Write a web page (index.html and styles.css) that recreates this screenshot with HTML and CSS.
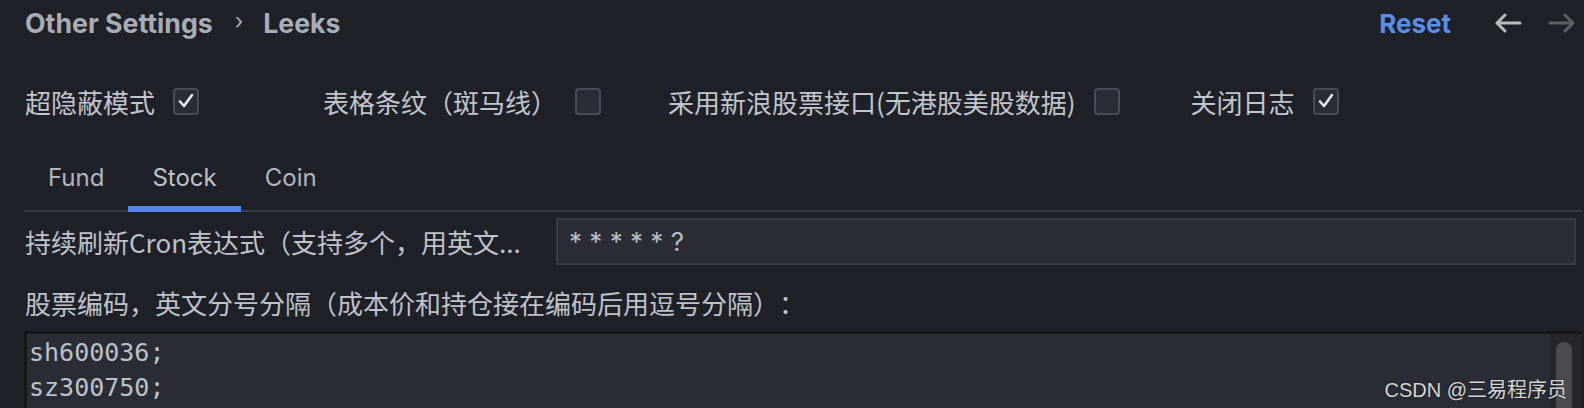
FILE: index.html
```html
<!DOCTYPE html>
<html lang="zh">
<head>
<meta charset="utf-8">
<title>Leeks Settings</title>
<link rel="stylesheet" href="styles.css">
</head>
<body>
<div class="page">
  <header class="header">
    <div class="crumbs">
      <span class="crumb">Other Settings</span>
      <span class="chev">›</span>
      <span class="crumb">Leeks</span>
    </div>
    <div class="actions">
      <span class="reset">Reset</span>
      <svg class="arrow back" width="28" height="20" viewBox="0 0 28 20"><path d="M26 10H3M11 2L3 10l8 8" fill="none" stroke="currentColor" stroke-width="3" stroke-linecap="round" stroke-linejoin="round"/></svg>
      <svg class="arrow fwd" width="28" height="20" viewBox="0 0 28 20"><path d="M2 10h23M17 2l8 8-8 8" fill="none" stroke="currentColor" stroke-width="3" stroke-linecap="round" stroke-linejoin="round"/></svg>
    </div>
  </header>

  <div class="options">
    <label class="opt opt-first"><span>超隐蔽模式</span><span class="cb checked"><svg width="18" height="18" viewBox="0 0 18 18"><path d="M3 9.5l4 4.5 8-11" fill="none" stroke="currentColor" stroke-width="2.6" stroke-linecap="round" stroke-linejoin="round"/></svg></span></label>
    <label class="opt opt-second"><span>表格条纹（斑马线）</span><span class="cb"></span></label>
    <label class="opt"><span>采用新浪股票接口(无港股美股数据)</span><span class="cb"></span></label>
    <label class="opt"><span>关闭日志</span><span class="cb checked"><svg width="18" height="18" viewBox="0 0 18 18"><path d="M3 9.5l4 4.5 8-11" fill="none" stroke="currentColor" stroke-width="2.6" stroke-linecap="round" stroke-linejoin="round"/></svg></span></label>
  </div>

  <nav class="tabs">
    <span class="tab">Fund</span>
    <span class="tab active">Stock</span>
    <span class="tab">Coin</span>
  </nav>

  <div class="cron-row">
    <span class="cron-label">持续刷新Cron表达式（支持多个，用英文...</span>
    <div class="input">* * * * * ?</div>
  </div>

  <div class="codes-label">股票编码，英文分号分隔（成本价和持仓接在编码后用逗号分隔）：</div>

  <div class="editor">
    <div class="code">sh600036;<br>sz300750;</div>
    <div class="scroll"><div class="thumb"></div></div>
  </div>

  <div class="watermark">CSDN @三易程序员</div>
</div>
</body>
</html>
```
FILE: styles.css
```css
* { box-sizing: border-box; }
html, body {
  margin: 0;
  padding: 0;
  background: #1f2129;
  height: 408px;
  overflow: hidden;
}
.page {
  position: relative;
  height: 408px;
  padding: 0 2px 0 24px;
  font-family: Inter, "Noto Sans CJK SC", sans-serif;
  color: #bfc2c9;
}
.header {
  height: 46px;
  display: flex;
  align-items: center;
  justify-content: space-between;
  padding-left: 1px;
}
.crumbs {
  display: flex;
  align-items: center;
  color: #a9adb6;
  font-weight: 700;
  font-size: 26.7px;
}
.chev {
  font-weight: 400;
  font-size: 22px;
  margin: 0 20px 0 22px;
  position: relative;
  top: -2px;
}
.actions {
  display: flex;
  align-items: center;
  padding-right: 6px;
}
.reset {
  color: #5b8ee6;
  font-weight: 700;
  font-size: 26px;
  margin-right: 43px;
}
.arrow { display: block; }
.back { color: #b9bbbe; margin-right: 26px; }
.fwd { color: #5f6063; }

.options {
  height: 110px;
  display: flex;
  align-items: center;
  padding-left: 1px;
  font-family: "Noto Sans CJK SC", sans-serif;
  font-size: 26px;
  color: #c2c5cc;
}
.opt {
  display: flex;
  align-items: center;
  gap: 18px;
  margin-right: 71px;
}
.opt-first { margin-right: 124px; }
.opt-second { margin-right: 67px; }
.cb {
  width: 26px;
  height: 27px;
  border: 2px solid #474c57;
  border-radius: 4px;
  background: #2a2d35;
  display: flex;
  align-items: center;
  justify-content: center;
  color: #e4e6ea;
}

.tabs {
  display: flex;
  height: 56px;
  box-shadow: inset 0 -2px 0 #393c46;
}
.tab {
  padding: 0 24px;
  line-height: 44px;
  height: 56px;
  font-size: 24px;
  color: #b2b6be;
}
.tab.active {
  box-shadow: inset 0 -6px 0 #5485ea;
  color: #bfc2c9;
}

.cron-row {
  margin-top: 6px;
  display: flex;
  align-items: center;
  height: 47px;
  padding-right: 6px;
}
.cron-label {
  width: 532px;
  padding-left: 1px;
  font-family: "Noto Sans CJK SC", sans-serif;
  font-size: 26px;
  white-space: nowrap;
}
.input {
  flex: 1;
  height: 47px;
  border: 2px solid #373a44;
  background: #2a2d35;
  padding-left: 11px;
  line-height: 43px;
  font-size: 26px;
  color: #b8bcc4;
}

.codes-label {
  margin-top: 20px;
  line-height: 36px;
  padding-left: 1px;
  font-family: "Noto Sans CJK SC", sans-serif;
  font-size: 26px;
  text-spacing-trim: space-all;
}
.editor {
  margin-top: 10px;
  display: flex;
  height: 77px;
  border-top: 3px solid #15171b;
  border-left: 3px solid #15171b;
  background: #2a2d35;
  overflow: hidden;
}
.code {
  flex: 1;
  padding: 1px 0 0 2px;
  font-family: "DejaVu Sans Mono", monospace;
  font-size: 25px;
  line-height: 35px;
  color: #bcc1ca;
}
.scroll {
  width: 32px;
  background: #25272d;
  padding: 8px 0 0 6px;
}
.thumb {
  width: 16px;
  height: 120px;
  border-radius: 8px;
  background: #4a4c52;
}
.watermark {
  position: absolute;
  right: 17px;
  top: 374px;
  font-family: "Liberation Sans", "Noto Sans CJK SC", sans-serif;
  font-size: 20px;
  color: #d6d6d6;
  text-shadow: 0 0 2px rgba(0,0,0,0.6);
}
```
